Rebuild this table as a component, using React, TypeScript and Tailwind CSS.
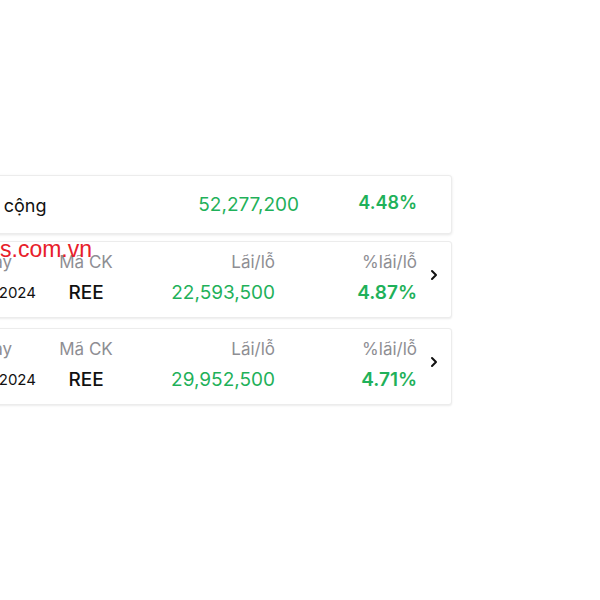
import React from 'react';

type Row = { date: string; code: string; pnl: string; pct: string };

const rows: Row[] = [
  { date: '15/03/2024', code: 'REE', pnl: '22,593,500', pct: '4.87%' },
  { date: '15/03/2024', code: 'REE', pnl: '29,952,500', pct: '4.71%' },
];

function Chevron() {
  return (
    <svg width="10" height="12" viewBox="0 0 10 12" fill="none">
      <path d="M3 2l4 4-4 4" stroke="#111" strokeWidth="2" strokeLinecap="round" strokeLinejoin="round" />
    </svg>
  );
}

function TradeCard({ row, className }: { row: Row; className?: string }) {
  return (
    <div className={`flex items-center bg-white border border-[#ececec] rounded-[3px] shadow-[0_1px_2px_rgba(0,0,0,0.08)] pt-[9px] pb-[12px] ${className ?? ''}`}>
      <div className="flex flex-1 flex-col gap-[8px]">
        <div className="flex text-[17px] leading-[22px] text-[#8e8e93]">
          <div className="w-[128px] text-center pr-[8px]">Ngày</div>
          <div className="w-[54px] text-center">Mã CK</div>
          <div className="flex-1 text-right">Lãi/lỗ</div>
          <div className="w-[142px] text-right">%lãi/lỗ</div>
        </div>
        <div className="flex items-center leading-[24px]">
          <div className="w-[128px] text-center text-[15px] text-[#111]">{row.date}</div>
          <div className="w-[54px] text-center text-[19px] font-medium text-[#111]">{row.code}</div>
          <div className="flex-1 text-right text-[19px] text-[#1fb15a]">{row.pnl}</div>
          <div className="w-[142px] text-right text-[19px] font-semibold text-[#1fb15a]">{row.pct}</div>
        </div>
      </div>
      <div className="w-[34px] flex justify-center pb-[6px]">
        <Chevron />
      </div>
    </div>
  );
}

export default function App() {
  return (
    <div className="relative h-[600px] w-[600px] overflow-hidden bg-white font-['Inter','Roboto',sans-serif]">
      <div className="ml-[-70px] w-[522px] pt-[175px]">
        {/* Summary */}
        <div className="flex items-center h-[59px] bg-white border border-[#ececec] rounded-[3px] shadow-[0_1px_3px_rgba(0,0,0,0.1)] pl-[25px] pr-[34px]">
          <div className="flex-1 text-[18px] text-[#111] pt-[1px]">Tổng cộng</div>
          <div className="text-[19px] text-[#1fb15a] pt-[1px]">52,277,200</div>
          <div className="w-[118px] text-right text-[18px] font-semibold text-[#1fb15a] pb-[5px]">4.48%</div>
        </div>

        <TradeCard row={rows[0]} className="mt-[7px]" />
        <TradeCard row={rows[1]} className="mt-[10px]" />
      </div>

      {/* watermark */}
      <div className="absolute left-0 top-[236px] text-[23px] leading-[27px] text-[#e8202a] font-['Liberation_Sans',sans-serif]">
        s.com.vn
      </div>
    </div>
  );
}
